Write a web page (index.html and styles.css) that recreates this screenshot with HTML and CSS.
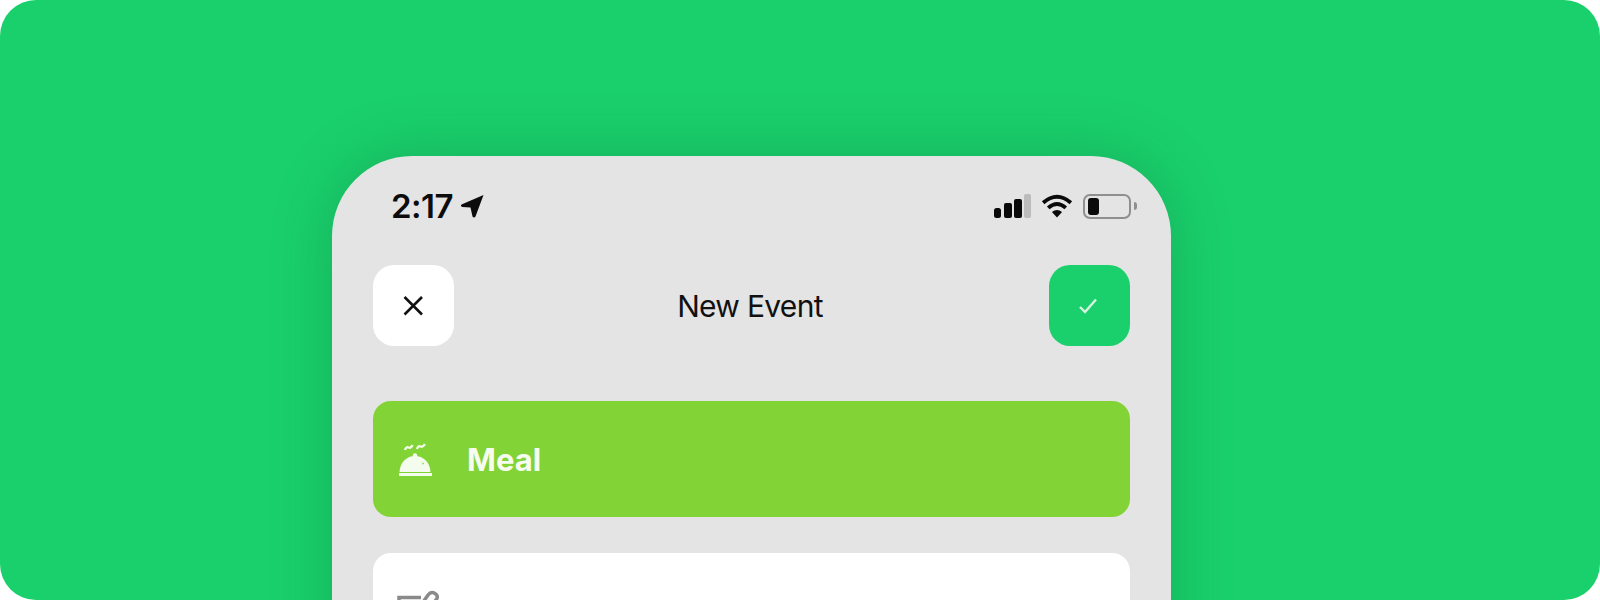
FILE: index.html
```html
<!DOCTYPE html>
<html lang="en">
<head>
  <meta charset="UTF-8" />
  <title>New Event</title>
  <link rel="stylesheet" href="styles.css">
</head>
<body>
  <div class="stage">
    <div class="phone">
      <div class="status-bar">
        <div class="status-left">
          <span class="time">2:17</span>
          <svg class="location" width="24" height="24" viewBox="0 0 24 24">
            <path d="M23.500 1 L1.500 10.500 Q0 12.500 2.500 13 L10.500 13.500 L12.500 22.500 Q14 24.500 15.500 22.500 Z" fill="#0c0c0c"/>
          </svg>
        </div>
        <div class="status-right">
          <svg class="signal" width="37" height="24" viewBox="0 0 37 24">
            <rect x="0" y="14" width="7" height="10" rx="2.500" fill="#0a0a0a"/>
            <rect x="10" y="9" width="8" height="15" rx="2" fill="#0a0a0a"/>
            <rect x="20" y="5" width="8" height="19" rx="2" fill="#0a0a0a"/>
            <rect x="30" y="0" width="7" height="24" rx="2" fill="#bcbcbc"/>
          </svg>
          <svg class="wifi" width="32" height="24" viewBox="0 0 34 26">
            <path d="M2 9.500 Q17 -3.500 32 9.500" fill="none" stroke="#0a0a0a" stroke-width="4.200"/>
            <path d="M7.500 15 Q17 6.500 26.500 15" fill="none" stroke="#0a0a0a" stroke-width="4.200"/>
            <path d="M11.500 19.500 Q17 15 22.500 19.500 L17 25.500 Z" fill="#0a0a0a"/>
          </svg>
          <div class="battery">
            <div class="battery-level"></div>
          </div>
          <div class="battery-cap"></div>
        </div>
      </div>

      <div class="top-bar">
        <button class="square-btn close-btn">
          <svg width="24" height="24" viewBox="0 0 24 24">
            <path d="M2.500 3 L20 20.500 M20 3 L2.500 20.500" stroke="#111" stroke-width="2.600" fill="none"/>
          </svg>
        </button>
        <h1>New Event</h1>
        <button class="square-btn done-btn">
          <svg width="24" height="24" viewBox="0 0 24 24">
            <path d="M3 13 L8 18 L19 5.500" stroke="#d8f5e2" stroke-width="2.400" fill="none"/>
          </svg>
        </button>
      </div>

      <div class="type-row">
        <svg class="meal-icon" width="36" height="36" viewBox="0 0 36 36">
          <path d="M8 9 q1 -3.500 3.500 -2.500 t4 -2.500 M20 8 q1 -3.500 3.500 -2.500 t4.500 -2.500" fill="none" stroke="#f2fbe8" stroke-width="2.400"/>
          <circle cx="18" cy="14.500" r="2.200" fill="#f4fcee"/>
          <path d="M2.500 31 C3 21 10 15 18 15 C26 15 33 21 33.500 31 Z" fill="#f4fcee"/>
          <circle cx="26" cy="22.500" r="1" fill="#9fdc6a"/>
          <rect x="2" y="32" width="33" height="3" fill="#f4fcee"/>
        </svg>
        <span class="type-name">Meal</span>
      </div>

      <div class="field">
        <svg class="note-icon" width="42" height="42" viewBox="0 0 42 42">
          <path d="M2 40 V7.500 H24" fill="none" stroke="#8a8a8a" stroke-width="3.500"/>
          <path d="M2 14 H20 M2 20 H16" fill="none" stroke="#8a8a8a" stroke-width="3"/>
          <path d="M22 18 L31 5 Q34 1 38 3.500 Q42 6 39 10 L28 22 Z" fill="none" stroke="#8a8a8a" stroke-width="3.500"/>
        </svg>
        <span class="field-text">Lunch</span>
      </div>
    </div>
  </div>
</body>
</html>
```

FILE: styles.css
```css
* { box-sizing: border-box; margin: 0; padding: 0; }
body {
  background-color: #fff;
  font-family: Inter, "Liberation Sans", sans-serif;
}
.stage {
  width: 1600px;
  height: 600px;
  background-color: #1ad06c;
  border-radius: 36px;
  overflow: hidden;
  padding: 156px 0 0 332px;
}
.phone {
  width: 839px;
  height: 700px;
  background-color: #e4e4e4;
  border-radius: 80px 80px 0 0;
  box-shadow: 0 0 60px rgba(10, 90, 50, 0.28);
  padding: 0 41px;
}
.status-bar {
  height: 109px;
  padding-top: 32px;
  display: flex;
  justify-content: space-between;
  align-items: flex-start;
}
.status-left {
  display: flex;
  align-items: center;
  gap: 7px;
  padding-left: 18px;
  height: 36px;
}
.time {
  font-size: 33px;
  font-weight: 600;
  color: #0c0c0c;
  letter-spacing: -0.5px;
}
.status-right {
  display: flex;
  align-items: center;
  height: 36px;
  margin-right: -7px;
}
.signal { margin-right: 10px; }
.wifi { margin-right: 10px; }
.battery {
  width: 48px;
  height: 25px;
  border: 2px solid #8f8f8f;
  border-radius: 7px;
  padding: 2px 3px;
}
.battery-level {
  width: 11px;
  height: 100%;
  background-color: #0a0a0a;
  border-radius: 3px;
}
.battery-cap {
  width: 3px;
  height: 8px;
  background-color: #8f8f8f;
  border-radius: 0 3px 3px 0;
  margin-left: 3px;
}
.top-bar {
  display: flex;
  justify-content: space-between;
  align-items: center;
  height: 81px;
}
h1 {
  font-size: 30px;
  font-weight: 400;
  letter-spacing: -0.7px;
  color: #111;
  margin-right: 3px;
}
.square-btn {
  width: 81px;
  height: 81px;
  border: none;
  border-radius: 21px;
  display: flex;
  align-items: center;
  justify-content: center;
}
.close-btn { background-color: #fff; }
.done-btn { background-color: #1ad06c; }
.type-row {
  margin-top: 55px;
  height: 116px;
  background-color: #82d336;
  border-radius: 18px;
  display: flex;
  align-items: center;
  padding-left: 24px;
  gap: 34px;
}
.type-name {
  font-size: 31px;
  font-weight: 700;
  color: #f7fcf0;
}
.field {
  margin-top: 36px;
  height: 116px;
  background-color: #fff;
  border-radius: 18px;
  display: flex;
  align-items: center;
  padding-left: 24px;
  gap: 28px;
}
.field-text {
  font-size: 30px;
  color: #8a8a8a;
}
```
